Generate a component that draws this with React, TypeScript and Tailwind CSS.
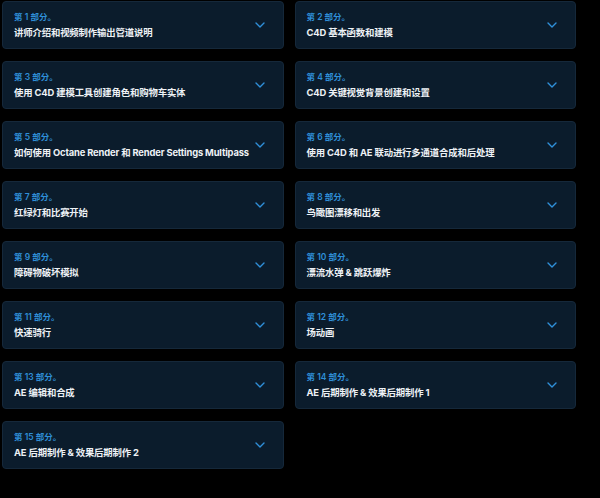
const PARTS = [
  "讲师介绍和视频制作输出管道说明",
  "C4D 基本函数和建模",
  "使用 C4D 建模工具创建角色和购物车实体",
  "C4D 关键视觉背景创建和设置",
  "如何使用 Octane Render 和 Render Settings Multipass",
  "使用 C4D 和 AE 联动进行多通道合成和后处理",
  "红绿灯和比赛开始",
  "鸟瞰图漂移和出发",
  "障碍物破坏模拟",
  "漂流水弹 & 跳跃爆炸",
  "快速骑行",
  "场动画",
  "AE 编辑和合成",
  "AE 后期制作 & 效果后期制作 1",
  "AE 后期制作 & 效果后期制作 2",
];

function Chevron() {
  return (
    <svg className="w-[10px] h-[6px] shrink-0 text-[#2f8fd8]" viewBox="0 0 10 6" fill="none">
      <path d="M1 1l4 4 4-4" stroke="currentColor" strokeWidth={1.4} strokeLinecap="round" strokeLinejoin="round" />
    </svg>
  );
}

export default function App() {
  return (
    <div
      className="w-[600px] h-[498px] bg-black overflow-hidden"
      style={{ fontFamily: 'Inter, "Noto Sans CJK SC", sans-serif' }}
    >
      <div className="ml-[2px] mt-[1px] w-[574px] grid grid-cols-2 gap-x-[11px] gap-y-[12px]">
        {PARTS.map((title, i) => (
          <div
            key={i}
            className="h-[48px] flex items-center justify-between pl-[11px] pr-[18px] rounded-[4px] bg-[#0b1c2c] border border-[#15283a]"
          >
            <div className="min-w-0 -mt-[1px]">
              <div className="text-[8.5px] leading-[12px] font-semibold text-[#2f8fd8]">
                第 {i + 1} 部分。
              </div>
              <div className="mt-[3px] text-[9.4px] leading-[13px] font-bold tracking-[-0.15px] text-[#eef2f6] whitespace-nowrap">
                {title}
              </div>
            </div>
            <Chevron />
          </div>
        ))}
      </div>
    </div>
  );
}
